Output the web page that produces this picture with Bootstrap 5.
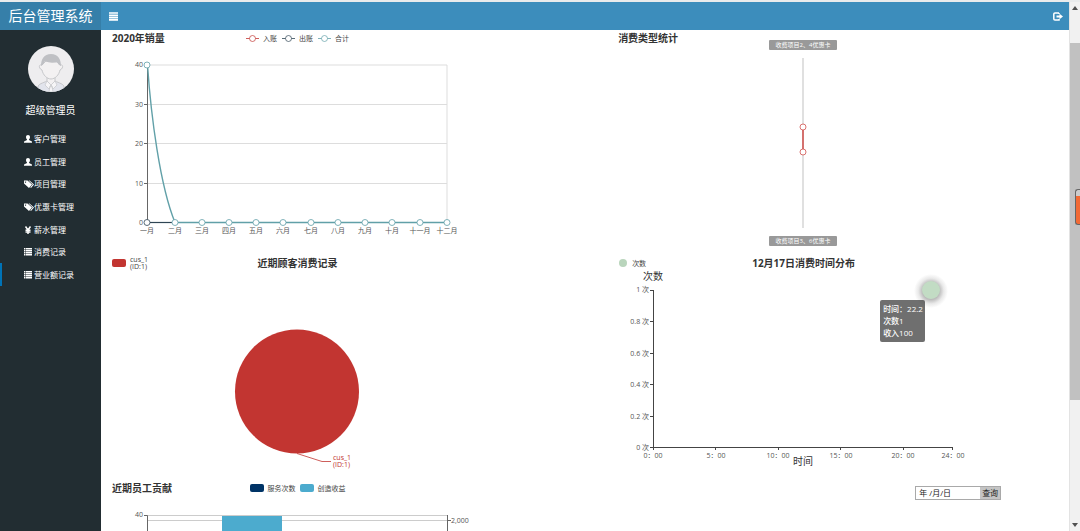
<!DOCTYPE html>
<html lang="zh-CN">
<head>
<meta charset="utf-8">
<meta name="viewport" content="width=device-width, initial-scale=1">
<title>后台管理系统</title>
<link rel="stylesheet" href="https://cdn.jsdelivr.net/npm/bootstrap@5.3.0/dist/css/bootstrap.min.css">
<style>
body{font-family:"Open Sans","Noto Sans CJK SC",sans-serif;font-size:8px;line-height:12px;color:#333;background:#fff;border-top:2px solid #e9ebec}
.topbar{background:#3c8dbc;height:28px;padding-right:6px}
.brand{background:#367fa9;width:101px;font-size:14px;line-height:28px}
.tool{line-height:0;color:#fff}
.sidebar{background:#222d32;width:101px}
.avatar{width:46px;height:46px}
.username{font-size:10px;line-height:16px;margin-top:10px}
.menu{height:158px;margin-top:10px}
.menu a{color:#fff;font-size:8px;padding-left:24px;gap:2px;border-radius:0}
.menu a.active{box-shadow:inset 2px 0 #0073b7}
.menu svg{width:8px;height:8px;flex:none;overflow:visible}
.board{display:grid;grid-template-columns:19fr 17fr;grid-auto-rows:225px;padding-left:9px}
.chart{width:375px;max-width:100%}
.chart svg.plot{display:block;width:100%;height:209px;overflow:visible}
.chart-head{display:grid;grid-template-columns:1fr auto 1fr;height:16px;padding:0 2px;align-items:center}
.chart-head h2{font-size:10px;line-height:16px;font-weight:700;white-space:nowrap;margin:0}
.legend-row{font-size:7px;line-height:7px;white-space:nowrap;color:#444}
.lines{gap:5px}
.swatch{width:14px;height:8px;border-radius:2px}
.plot text{font-size:7px;fill:#555;dominant-baseline:central}
.plot .axis-name{font-size:10px;fill:#333}
.plot .pill-text{font-size:6px;fill:#fff}
.plot .pie-label{fill:#c23531}
.plot .mid text{text-anchor:middle}
.plot .end text{text-anchor:end}
.tip{left:264px;top:45px;width:45px;padding:3px;background:rgba(50,50,50,.7);border-radius:2px;color:#fff;font-weight:500;white-space:nowrap}
.query{width:86px;height:14px;margin:6px 0 0 299px;border:1px solid #a9a9a9}
.query input{width:64px;border:0;padding:0 3px;font-size:8px;line-height:12px;color:#222}
.query button{border:0;padding:0;font-size:8px;line-height:12px;background:#c4c4c4;color:#222}
.scroll{width:11px;background:#f1f1f1;border-left:1px solid #e3e3e3}
.scroll .thumb{background:#c1c1c1;flex:0 0 68%;margin-top:33px}
.gauge{right:0;top:187px;width:5px;height:36px;border:1px solid #666;border-right:0;border-radius:3px 0 0 3px;background:linear-gradient(#ccc 6px,#f26a35 6px)}
</style>
</head>
<body class="vh-100 overflow-hidden d-flex position-relative">
<svg class="d-none" aria-hidden="true">
  <symbol id="i-user" viewBox="0 0 16 16"><path fill="currentColor" d="M8 0c2.500 0 4 1.800 4 4.300 0 2-.8 3.700-2 4.700v1.200l5 2.300c.7.300 1 .8 1 1.500v1.500H0V14c0-.7.300-1.200 1-1.500l5-2.300V9C4.800 8 4 6.300 4 4.300 4 1.800 5.500 0 8 0z"/></symbol>
  <symbol id="i-tags" viewBox="0 0 20 16"><path fill="currentColor" fill-rule="evenodd" d="M0 1h7l9 8-6 7L0 7zM3 2.800a1.300 1.300 0 1 0 .1 0z"/><path fill="currentColor" d="M9 1h2l9 8-6 7-1.500-1.300L17.500 9z"/></symbol>
  <symbol id="i-yen" viewBox="0 0 16 16"><path fill="none" stroke="currentColor" stroke-width="3" d="M3 1l5 7 5-7M8 8v8M3 8.500h10M3 12h10"/></symbol>
  <symbol id="i-list" viewBox="0 0 16 16"><path fill="currentColor" d="M0 0h3v3H0zM4 0h12v3H4zM0 4h3v3H0zM4 4h12v3H4zM0 8h3v3H0zM4 8h12v3H4zM0 12h3v3H0zM4 12h12v3H4z"/></symbol>
</svg>

<div class="d-flex flex-column flex-grow-1 overflow-hidden">
  <header class="topbar d-flex align-items-center flex-shrink-0">
    <a href="#" class="brand text-white text-center text-decoration-none">后台管理系统</a>
    <button class="tool btn border-0 p-0 ms-2" type="button" aria-label="切换菜单">
      <svg width="9" height="9" viewBox="0 0 9 9"><path stroke="#fff" stroke-width="1.700" d="M0 1h9M0 3.300h9M0 5.600h9M0 7.900h9"/></svg>
    </button>
    <a href="#" class="tool ms-auto" aria-label="退出">
      <svg width="10" height="9" viewBox="0 0 10 9"><path fill="none" stroke="#fff" stroke-width="1.500" d="M6 1H2Q.8 1 .8 2v5Q.8 8 2 8h4V7M6 1v1"/><path fill="#fff" d="M3.500 3.500h3V1.700L10 4.500 6.500 7.300V5.500h-3z"/></svg>
    </a>
  </header>

  <div class="d-flex flex-grow-1 overflow-hidden">
    <aside class="sidebar flex-shrink-0">
      <div class="text-center text-white pt-3">
        <svg class="avatar d-block mx-auto" viewBox="0 0 46 46" role="img" aria-label="头像">
          <defs><clipPath id="round"><circle cx="23" cy="23" r="23"/></clipPath></defs>
          <g clip-path="url(#round)" stroke="#c6c7ca" stroke-width="1">
            <path fill="#eeedef" stroke="none" d="M0 0h46v46H0z"/>
            <path fill="#e2e4ec" d="M10 46v-5c0-3 5-4 9-6l4 3 4-3c4 2 9 3 9 6v5z"/>
            <path fill="#f3f1f2" d="M19 30v5l4 5 4-5v-5"/>
            <path fill="#f3f1f2" d="M14 19c-4-1-3 4 0 5 1 5 5 9 9 9s8-4 9-9c3-1 4-6 0-5l-3-3-11-1z"/>
            <path fill="#bfc0c4" stroke="none" d="M13 20c0-7 3-12 10-12s10 5 10 12c-2-1-3-2-4-4-4 1-8 1-12-1-1 2-2 4-4 5z"/>
            <path fill="#f6f5f7" stroke-width=".7" d="M19 35l-2 4 4 4 2-4 2 4 4-4-2-4-4 4zM22 40l-1 6h4l-1-6z"/>
          </g>
        </svg>
        <div class="username">超级管理员</div>
      </div>
      <nav class="menu nav flex-column flex-nowrap">
        <a class="nav-link flex-fill d-flex align-items-center py-0 pe-0" href="#"><svg><use href="#i-user"/></svg>客户管理</a>
        <a class="nav-link flex-fill d-flex align-items-center py-0 pe-0" href="#"><svg><use href="#i-user"/></svg>员工管理</a>
        <a class="nav-link flex-fill d-flex align-items-center py-0 pe-0" href="#"><svg><use href="#i-tags" width="10" height="8"/></svg>项目管理</a>
        <a class="nav-link flex-fill d-flex align-items-center py-0 pe-0" href="#"><svg><use href="#i-tags" width="10" height="8"/></svg>优惠卡管理</a>
        <a class="nav-link flex-fill d-flex align-items-center py-0 pe-0" href="#"><svg><use href="#i-yen"/></svg>薪水管理</a>
        <a class="nav-link flex-fill d-flex align-items-center py-0 pe-0" href="#"><svg><use href="#i-list"/></svg>消费记录</a>
        <a class="nav-link active flex-fill d-flex align-items-center py-0 pe-0" href="#" aria-current="page"><svg><use href="#i-list"/></svg>营业额记录</a>
      </nav>
    </aside>

    <main class="board flex-grow-1">
      <section class="chart">
        <div class="chart-head">
          <h2>2020年销量</h2>
          <div class="legend-row lines d-flex">
            <span class="d-flex gap-1"><svg width="13" height="7"><path stroke="#c23531" stroke-width=".8" d="M0 3.500h13"/><circle cx="6.500" cy="3.500" r="3" fill="#fff" stroke="#c23531" stroke-width=".7"/></svg>入账</span>
            <span class="d-flex gap-1"><svg width="13" height="7"><path stroke="#2f4554" stroke-width=".8" d="M0 3.500h13"/><circle cx="6.500" cy="3.500" r="3" fill="#fff" stroke="#2f4554" stroke-width=".7"/></svg>出账</span>
            <span class="d-flex gap-1"><svg width="13" height="7"><path stroke="#61a0a8" stroke-width=".8" d="M0 3.500h13"/><circle cx="6.500" cy="3.500" r="3" fill="#fff" stroke="#61a0a8" stroke-width=".7"/></svg>合计</span>
          </div>
        </div>
        <svg class="plot" viewBox="0 0 375 209">
          <path fill="none" stroke="#ddd" d="M37 19H337V176M37 58.500H337M37 97.500H337M37 137.500H337"/>
          <path fill="none" stroke="#666" d="M37.500 19V176.500M34 19h3M34 58.500h3M34 97.500h3M34 137.500h3M34 176.500h3"/>
          <path stroke="#2f4554" stroke-width="1.200" d="M37 176.500h28"/>
          <path fill="none" stroke="#61a0a8" stroke-width="1.400" d="M37.500 19C41 70 50 140 65 176.500H337"/>
          <g fill="#fff" stroke="#61a0a8" stroke-width=".8">
            <circle cx="37" cy="19" r="3"/><circle cx="37" cy="176.500" r="3" stroke="#2f4554"/><circle cx="65" cy="176.500" r="3"/><circle cx="92" cy="176.500" r="3"/><circle cx="119" cy="176.500" r="3"/><circle cx="146" cy="176.500" r="3"/><circle cx="173" cy="176.500" r="3"/><circle cx="201" cy="176.500" r="3"/><circle cx="228" cy="176.500" r="3"/><circle cx="255" cy="176.500" r="3"/><circle cx="282" cy="176.500" r="3"/><circle cx="310" cy="176.500" r="3"/><circle cx="337" cy="176.500" r="3"/>
          </g>
          <g class="end"><text x="33" y="18">40</text><text x="33" y="58">30</text><text x="33" y="97">20</text><text x="33" y="137">10</text><text x="33" y="176">0</text></g>
          <g class="mid"><text x="37" y="184">一月</text><text x="65" y="184">二月</text><text x="92" y="184">三月</text><text x="119" y="184">四月</text><text x="146" y="184">五月</text><text x="173" y="184">六月</text><text x="201" y="184">七月</text><text x="228" y="184">八月</text><text x="255" y="184">九月</text><text x="282" y="184">十月</text><text x="310" y="184">十一月</text><text x="337" y="184">十二月</text></g>
        </svg>
      </section>

      <section class="chart">
        <div class="chart-head"><h2>消费类型统计</h2></div>
        <svg class="plot" viewBox="0 0 375 209">
          <path stroke="#ccc" stroke-width="1.200" d="M187 12V78M187 109V182"/>
          <path stroke="#c23531" stroke-width="1.400" d="M187 84v19"/>
          <circle cx="187" cy="81" r="3" fill="#fff" stroke="#d0504c" stroke-width=".8"/><circle cx="187" cy="106" r="3" fill="#fff" stroke="#d0504c" stroke-width=".8"/>
          <rect x="153" y="-6" width="68" height="10" rx="1" fill="#999"/><rect x="153" y="190" width="68" height="10" rx="1" fill="#999"/>
          <g class="mid"><text class="pill-text" x="187" y="-1">收费项目2、4优惠卡</text><text class="pill-text" x="187" y="195">收费项目3、6优惠卡</text></g>
        </svg>
      </section>

      <section class="chart">
        <div class="chart-head">
          <div class="legend-row d-flex align-items-center"><i class="swatch me-1" style="background:#c23531"></i><span>cus_1<br>(ID:1)</span></div>
          <h2>近期顾客消费记录</h2>
        </div>
        <svg class="plot" viewBox="0 0 375 209">
          <circle cx="187" cy="120.500" r="62" fill="#c23531"/>
          <path fill="none" stroke="#c23531" stroke-width=".8" d="M187 182.500L212 190.500h9"/>
          <text class="pie-label" x="223" y="186">cus_1</text><text class="pie-label" x="223" y="193">(ID:1)</text>
        </svg>
      </section>

      <section class="chart position-relative">
        <div class="chart-head">
          <div class="legend-row d-flex align-items-center gap-1"><svg width="10" height="8"><circle cx="5" cy="4" r="4" fill="#b9d5bc"/></svg>次数</div>
          <h2>12月17日消费时间分布</h2>
        </div>
        <svg class="plot" viewBox="0 0 375 209">
          <defs><radialGradient id="halo"><stop offset="50%" stop-color="#777" stop-opacity=".5"/><stop offset="75%" stop-color="#777" stop-opacity=".16"/><stop offset="100%" stop-color="#777" stop-opacity="0"/></radialGradient></defs>
          <path fill="none" stroke="#444" d="M37.500 19V176.500H337M34 19.500h3M34 50.500h3M34 82.500h3M34 113.500h3M34 145.500h3M34 176.500h3M37.500 176v3M99.500 176v3M162.500 176v3M224.500 176v3M287.500 176v3M336.500 176v3"/>
          <circle cx="315" cy="20" r="17" fill="url(#halo)"/><circle cx="315" cy="19" r="9" fill="#c2dcc4"/>
          <g class="end"><text x="33" y="18">1 次</text><text x="33" y="50">0.8 次</text><text x="33" y="82">0.6 次</text><text x="33" y="113">0.4 次</text><text x="33" y="145">0.2 次</text><text x="33" y="176">0 次</text></g>
          <g class="mid"><text x="37" y="184">0：00</text><text x="100" y="184">5：00</text><text x="162" y="184">10：00</text><text x="225" y="184">15：00</text><text x="287" y="184">20：00</text><text x="337" y="184">24：00</text><text class="axis-name" x="37" y="5">次数</text><text class="axis-name" x="187" y="190">时间</text></g>
        </svg>
        <div class="tip position-absolute" role="tooltip">时间：22.2<br>次数1<br>收入100</div>
      </section>

      <section class="chart">
        <div class="chart-head">
          <h2>近期员工贡献</h2>
          <div class="legend-row d-flex gap-1">
            <span class="d-flex align-items-center"><i class="swatch me-1" style="background:#003366"></i>服务次数</span>
            <span class="d-flex align-items-center"><i class="swatch me-1" style="background:#4cabce"></i>创造收益</span>
          </div>
        </div>
        <svg class="plot" viewBox="0 0 375 209">
          <path stroke="#ccc" d="M37 19.500H337M37 24.500H337"/>
          <path fill="#4cabce" d="M112 20h60v189h-60z"/>
          <path fill="none" stroke="#666" d="M34 19.500h3.500V209M337.500 19V209M338 24.500h3"/>
          <g class="end"><text x="33" y="18">40</text></g><text x="341" y="24">2,000</text>
        </svg>
      </section>

      <section class="chart">
        <form class="query d-flex">
          <input type="text" value="年 /月/日" aria-label="日期">
          <button type="button" class="flex-grow-1">查询</button>
        </form>
      </section>
    </main>
  </div>
</div>

<div class="scroll d-flex flex-column align-items-center flex-shrink-0 pb-1">
  <svg width="6" height="4" class="flex-shrink-0 mt-1"><path fill="#505050" d="M0 4l3-4 3 4z"/></svg>
  <div class="thumb w-100"></div>
  <svg width="6" height="4" class="flex-shrink-0 mt-auto"><path fill="#505050" d="M0 0l3 4 3-4z"/></svg>
</div>
<div class="gauge position-absolute"></div>
<script src="https://cdn.jsdelivr.net/npm/bootstrap@5.3.0/dist/js/bootstrap.bundle.min.js"></script>
</body>
</html>
